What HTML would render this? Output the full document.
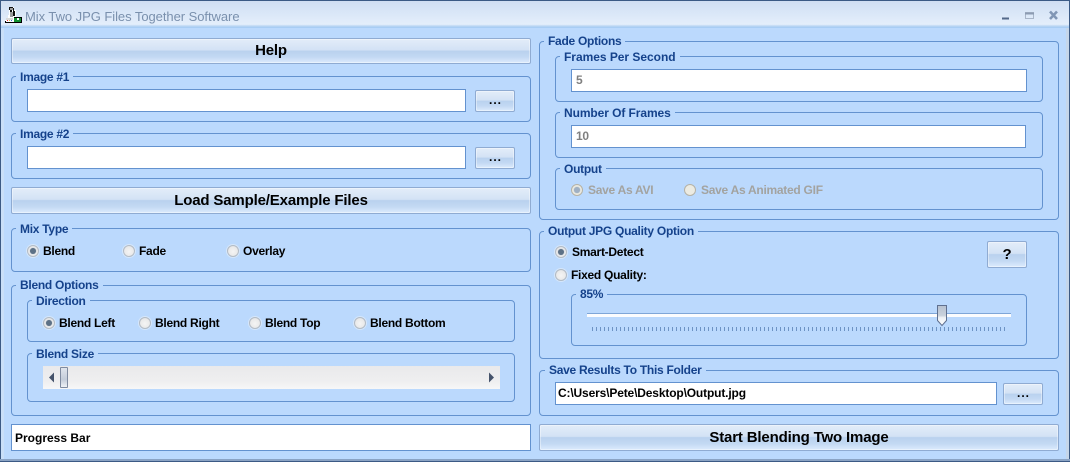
<!DOCTYPE html>
<html><head><meta charset="utf-8"><title>Mix Two JPG Files Together Software</title>
<style>
html,body{margin:0;padding:0}
body{width:1070px;height:462px;overflow:hidden;position:relative;background:#bbd9fd;font:bold 12px "Liberation Sans",sans-serif;letter-spacing:-.27px;color:#000}
div{position:absolute;box-sizing:border-box}
.g{border:1px solid #6392cf;border-radius:4px}
.l{color:#15428b;background:#bbd9fd;padding:0 4px;height:14px;line-height:14px;white-space:nowrap;top:-8px;left:4px;font-size:12px}
.d{top:-7px}
.i{background:#fff;border:1px solid #6392cf;padding-left:4px;line-height:21px;font-size:12px;white-space:nowrap}
.gr{color:#808080;font-weight:bold}
.b{border:1px solid #8fabd2;border-radius:2px;background:linear-gradient(#e3edf9 0,#d3e2f5 46%,#b9d1ee 50%,#c3d9f3 75%,#dcebfd 100%);text-align:center;font-size:15px;letter-spacing:-.16px;box-shadow:inset 0 0 0 1px rgba(255,255,255,.4)}
.b.s{font-size:12px;letter-spacing:1px;line-height:18px;padding-left:1px}
.r{width:12px;height:12px;border-radius:50%;border:1px solid #b4bcc6;background:radial-gradient(circle at 50% 55%,#f4f4f4 0,#eaeaea 60%,#cfd4da 100%);box-shadow:0 0 0 1px rgba(235,242,250,.55)}
.r.on::after{content:"";position:absolute;left:2px;top:2px;width:6px;height:6px;border-radius:50%;background:#5d7186;box-shadow:0 0 1px #8da0b6}
.t{white-space:nowrap;line-height:14px;height:14px}
.dis{color:#a3a3a0}
.r.off{border-color:#b5b2a6;background:#ecebe2;box-shadow:none}
.r.off.on::after{background:#9fb0c4}
</style></head><body>
<!-- title bar -->
<div style="left:0;top:0;width:1070px;height:28px;background:linear-gradient(#d0def2 0,#d6e4f6 30%,#e4eefb 90%,#b5d3f3 97%);border-top:1px solid #3b5a85;border-bottom:1px solid #a8cdf4"></div>
<div style="left:0;top:0;width:1px;height:462px;background:#3b5a85"></div>
<div style="left:1px;top:28px;width:3px;height:433px;background:#c9dff8"></div>
<div style="left:1069px;top:0;width:1px;height:462px;background:#3b5a85"></div>
<div style="left:1066px;top:28px;width:3px;height:433px;background:#c5d6ea"></div>
<div style="left:0;top:459px;width:1070px;height:3px;background:#8aa3c4;border-bottom:1px solid #3b5a85"></div>
<svg style="position:absolute;left:5px;top:6px" width="17" height="17" viewBox="0 0 17 17" shape-rendering="crispEdges">
<path d="M4 1h5v3h2v7h2v6H0v-3h3V9h1z" fill="#fff"/>
<path d="M4 1h4v1H5v2H4zM8 2h1v3H8zM5 4h2v2H5zM8 5h2v5H8z" fill="#111"/>
<path d="M5 2h3v2H5zM5 6h3v5H5z" fill="#9a9a9a"/>
<path d="M1 12h7v2H1z" fill="#d9d9d9"/>
<path d="M9 11h8v5H9z" fill="#0f8f2f"/><path d="M12 12h2v2h-2z" fill="#fff"/>
<path d="M0 15h1v1h15v1H0z" fill="#000"/><path d="M9 11h8v1H9zM16 11h1v6h-1z" fill="#000"/>
<path d="M2 14h1v1H2z" fill="#e34"/><path d="M4 14h1v1H4z" fill="#e9c53a"/><path d="M6 14h1v1H6z" fill="#3a6fd8"/>
</svg>
<div class="t" style="left:25px;top:10px;color:#7a90ad;font:13px/14px 'Liberation Sans',sans-serif;letter-spacing:-.05px">Mix Two JPG Files Together Software</div>
<svg style="position:absolute;left:1000px;top:10px" width="62" height="12" viewBox="0 0 62 12" fill="none">
<path d="M2 8.500h7" stroke="#54698a" stroke-width="2"/><path d="M25.500 2.500h8v6h-8z" stroke="#a8b5c8"/><path d="M25 3.500h9" stroke="#8c9bb2" stroke-width="2"/>
<path d="M50 1.500l7 7.500M57 1.500l-7 7.500" stroke="#8196b5" stroke-width="2.600"/></svg>

<!-- LEFT -->
<div class="b" style="left:11px;top:38px;width:520px;height:26px;line-height:24px">Help</div>
<div class="g" style="left:11px;top:76px;width:520px;height:46px"><div class="l d">Image #1</div></div>
<div class="i" style="left:27px;top:89px;width:439px;height:23px"></div>
<div class="b s" style="left:475px;top:90px;width:40px;height:22px">...</div>
<div class="g" style="left:11px;top:133px;width:520px;height:46px"><div class="l d">Image #2</div></div>
<div class="i" style="left:27px;top:146px;width:439px;height:23px"></div>
<div class="b s" style="left:475px;top:147px;width:40px;height:22px">...</div>
<div class="b" style="left:11px;top:187px;width:520px;height:27px;line-height:25px">Load Sample/Example Files</div>

<div class="g" style="left:11px;top:228px;width:520px;height:44px"><div class="l d">Mix Type</div></div>
<div class="r on" style="left:27px;top:245px"></div><div class="t" style="left:43px;top:244px">Blend</div>
<div class="r" style="left:123px;top:245px"></div><div class="t" style="left:139px;top:244px">Fade</div>
<div class="r" style="left:227px;top:245px"></div><div class="t" style="left:243px;top:244px">Overlay</div>

<div class="g" style="left:11px;top:285px;width:520px;height:131px"><div class="l">Blend Options</div></div>
<div class="g" style="left:27px;top:300px;width:488px;height:42px"><div class="l d">Direction</div></div>
<div class="r on" style="left:43px;top:317px"></div><div class="t" style="left:59px;top:316px">Blend Left</div>
<div class="r" style="left:139px;top:317px"></div><div class="t" style="left:155px;top:316px">Blend Right</div>
<div class="r" style="left:249px;top:317px"></div><div class="t" style="left:265px;top:316px">Blend Top</div>
<div class="r" style="left:354px;top:317px"></div><div class="t" style="left:370px;top:316px">Blend Bottom</div>

<div class="g" style="left:27px;top:353px;width:488px;height:49px"><div class="l d">Blend Size</div></div>
<div style="left:43px;top:366px;width:457px;height:23px;background:linear-gradient(#e9e9eb 0,#efeff0 70%,#f7f7f7 100%)"></div>
<svg style="position:absolute;left:43px;top:366px" width="457" height="23"><path d="M6 11.500l5-5v10z" fill="#45536b"/><path d="M451 11.500l-5-5v10z" fill="#45536b"/></svg>
<div style="left:60px;top:367px;width:8px;height:21px;border:1px solid #7f8ba0;border-radius:1px;background:linear-gradient(#dfe4ec,#c3ccd9 60%,#eef1f5)"></div>

<div class="i" style="left:11px;top:424px;width:520px;height:27px;line-height:26px;padding-left:3px;font-size:12px;letter-spacing:0">Progress Bar</div>

<!-- RIGHT -->
<div class="g" style="left:539px;top:41px;width:520px;height:179px"><div class="l">Fade Options</div></div>
<div class="g" style="left:555px;top:56px;width:488px;height:46px"><div class="l d" style="letter-spacing:-.03px">Frames Per Second</div></div>
<div class="i gr" style="left:571px;top:69px;width:456px;height:23px">5</div>
<div class="g" style="left:555px;top:112px;width:488px;height:46px"><div class="l d" style="letter-spacing:-.08px">Number Of Frames</div></div>
<div class="i gr" style="left:571px;top:125px;width:455px;height:23px">10</div>
<div class="g" style="left:555px;top:168px;width:488px;height:42px"><div class="l d">Output</div></div>
<div class="r off on" style="left:571px;top:184px"></div><div class="t dis" style="left:588px;top:183px">Save As AVI</div>
<div class="r off" style="left:684px;top:184px"></div><div class="t dis" style="left:701px;top:183px">Save As Animated GIF</div>

<div class="g" style="left:539px;top:231px;width:520px;height:128px"><div class="l">Output JPG Quality Option</div></div>
<div class="r on" style="left:555px;top:246px"></div><div class="t" style="left:572px;top:245px">Smart-Detect</div>
<div class="r" style="left:555px;top:269px"></div><div class="t" style="left:571px;top:268px">Fixed Quality:</div>
<div class="b" style="left:987px;top:241px;width:40px;height:27px;line-height:25px">?</div>
<div class="g" style="left:571px;top:294px;width:456px;height:52px"><div class="l">85%</div></div>
<div style="left:587px;top:313px;width:424px;height:4px;background:#fbfcfe;border-top:1px solid #7ea6d8"></div>
<svg style="position:absolute;left:592px;top:327px" width="416" height="5" shape-rendering="crispEdges"><line x1="0" y1="2" x2="416" y2="2" stroke="#6d93c4" stroke-width="4" stroke-dasharray="1 3"/></svg>
<svg style="position:absolute;left:936px;top:304px" width="13" height="23"><defs><linearGradient id="tg" x1="0" y1="0" x2="0" y2="1"><stop offset="0" stop-color="#b6c1d0"/><stop offset=".5" stop-color="#c9d1dc"/><stop offset=".6" stop-color="#eef1f5"/><stop offset="1" stop-color="#fff"/></linearGradient></defs><path d="M1.500 1.500h9v15l-4.500 5-4.500-5z" fill="url(#tg)" stroke="#5f7090"/></svg>

<div class="g" style="left:539px;top:370px;width:520px;height:46px"><div class="l" style="left:5px">Save Results To This Folder</div></div>
<div class="i" style="left:555px;top:382px;width:442px;height:23px;padding-left:2px;letter-spacing:-.15px">C:\Users\Pete\Desktop\Output.jpg</div>
<div class="b s" style="left:1003px;top:383px;width:40px;height:22px">...</div>
<div class="b" style="left:539px;top:424px;width:520px;height:27px;line-height:25px">Start Blending Two Image</div>
</body></html>
